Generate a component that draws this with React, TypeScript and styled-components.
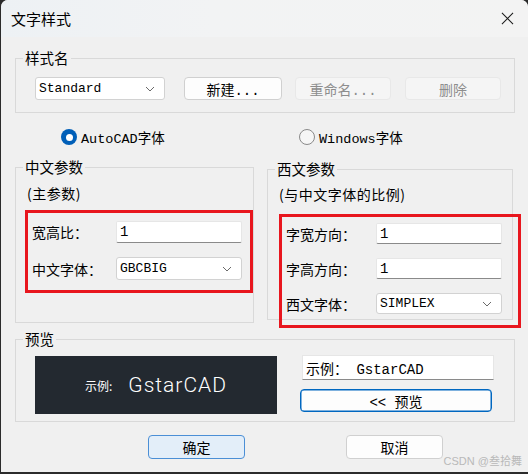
import React from "react";
import styled, {createGlobalStyle} from "styled-components";

const colors = {
    frame: "#2b2b2b",
    body: "#f0f0f0",
    line: "#d9d9d9",
    red: "#e8161e",
    blue: "#005fb8",
    text: "#000000",
    disabled: "#8d8d8d",
};

const cjk = `"Noto Sans CJK SC", "Noto Sans", sans-serif`;
const mono = `"Liberation Mono", "Noto Sans CJK SC", monospace`;

const GlobalStyle = createGlobalStyle`
  html, body {
    margin: 0;
    padding: 0;
    background: ${colors.frame};
  }
  body {
    width: 528px;
    height: 474px;
    overflow: hidden;
    font-family: ${cjk};
  }
`;

const App = () => {
    return (
        <>
            <GlobalStyle/>
            <Window>
                <TitleBar>
                    <Title>文字样式</Title>
                    <CloseIcon viewBox="0 0 14 14">
                        <path d="M1 1 L13 13 M13 1 L1 13" stroke="#1a1a1a" strokeWidth="1.1"/>
                    </CloseIcon>
                </TitleBar>

                <Content>
                    <Group $height={55} $top={21}>
                        <GroupLabel>样式名</GroupLabel>
                        <StyleRow>
                            <Combo $width={130}>
                                <ComboText>Standard</ComboText>
                                <Chevron/>
                            </Combo>
                            <Button $width={98}>新建...</Button>
                            <Button $width={96} $disabled>重命名...</Button>
                            <Button $width={96} $disabled>删除</Button>
                        </StyleRow>
                    </Group>

                    <RadioRow>
                        <RadioItem $width={238}>
                            <Radio $checked/>
                            <RadioText>AutoCAD字体</RadioText>
                        </RadioItem>
                        <RadioItem>
                            <Radio/>
                            <RadioText>Windows字体</RadioText>
                        </RadioItem>
                    </RadioRow>

                    <ParamsRow>
                        <Group $height={156} $width={239} $top={0}>
                            <GroupLabel>中文参数</GroupLabel>
                            <Hint $left={11} $top={16}>(主参数)</Hint>
                            <Highlight $left={9} $top={8} $width={228} $height={83} $pad="8px 0 0 4px">
                                <FieldRow>
                                    <FieldLabel $width={84}>宽高比：</FieldLabel>
                                    <TextBox>1</TextBox>
                                </FieldRow>
                                <FieldRow>
                                    <FieldLabel $width={84}>中文字体：</FieldLabel>
                                    <Combo $width={126}>
                                        <ComboText>GBCBIG</ComboText>
                                        <Chevron/>
                                    </Combo>
                                </FieldRow>
                            </Highlight>
                        </Group>

                        <Group $height={151} $width={246} $top={2}>
                            <GroupLabel>西文参数</GroupLabel>
                            <Hint $left={11} $top={15}>(与中文字体的比例)</Hint>
                            <Highlight $left={11} $top={11} $width={242} $height={114} $pad="6px 0 0 4px" $gap={14}>
                                <FieldRow>
                                    <FieldLabel $width={90}>字宽方向：</FieldLabel>
                                    <TextBox $height={21}>1</TextBox>
                                </FieldRow>
                                <FieldRow>
                                    <FieldLabel $width={90}>字高方向：</FieldLabel>
                                    <TextBox $height={21}>1</TextBox>
                                </FieldRow>
                                <FieldRow>
                                    <FieldLabel $width={90}>西文字体：</FieldLabel>
                                    <Combo $width={126} $height={21}>
                                        <ComboText>SIMPLEX</ComboText>
                                        <Chevron/>
                                    </Combo>
                                </FieldRow>
                            </Highlight>
                        </Group>
                    </ParamsRow>

                    <Group $height={83} $top={16}>
                        <GroupLabel>预览</GroupLabel>
                        <PreviewRow>
                            <PreviewCanvas>
                                <PreviewSmall>示例:</PreviewSmall>
                                <PreviewBig>GstarCAD</PreviewBig>
                            </PreviewCanvas>
                            <PreviewSide>
                                <SampleBox>示例： GstarCAD</SampleBox>
                                <Button $width={192} $focused>&lt;&lt; 预览</Button>
                            </PreviewSide>
                        </PreviewRow>
                    </Group>

                    <FooterRow>
                        <Button $width={97} $height={24} $primary>确定</Button>
                        <Button $width={97} $height={24}>取消</Button>
                    </FooterRow>
                </Content>
                <Watermark>CSDN @叁拾舞</Watermark>
            </Window>
        </>
    );
};

const Chevron = () => (
    <ChevronIcon viewBox="0 0 10 6">
        <path d="M1 1 L5 5 L9 1" fill="none" stroke="#6a6a6a" strokeWidth="1"/>
    </ChevronIcon>
);

const Window = styled.div`
  position: relative;
  box-sizing: border-box;
  width: 527px;
  height: 472px;
  margin-left: 1px;
  background: ${colors.body};
  border-radius: 7px 7px 0 0;
  overflow: hidden;
  display: flex;
  flex-direction: column;
`;

const TitleBar = styled.div`
  height: 37px;
  flex-shrink: 0;
  display: flex;
  align-items: center;
  justify-content: space-between;
  padding: 0 14px 0 10px;
  background: linear-gradient(90deg, #edf1f4 0%, #f2f3f4 40%, #f3f3f3 100%);
`;

const Title = styled.span`
  font-family: ${cjk};
  font-size: 15px;
  color: ${colors.text};
  line-height: 18px;
`;

const CloseIcon = styled.svg`
  width: 13px;
  height: 13px;
`;

const Content = styled.div`
  display: flex;
  flex-direction: column;
  padding: 0 13px 0 14px;
`;

const Group = styled.div<{ $height: number; $width?: number; $top: number }>`
  position: relative;
  box-sizing: border-box;
  height: ${p => p.$height}px;
  width: ${p => (p.$width ? `${p.$width}px` : "auto")};
  margin-top: ${p => p.$top}px;
  border: 1px solid ${colors.line};
  flex-shrink: 0;
`;

const GroupLabel = styled.span`
  position: absolute;
  top: -10px;
  left: 7px;
  padding: 0 2px;
  background: ${colors.body};
  font-family: ${cjk};
  font-size: 14.5px;
  line-height: 18px;
  color: ${colors.text};
`;

const StyleRow = styled.div`
  display: flex;
  align-items: center;
  padding: 18px 0 0 19px;

  & > *:nth-child(2) { margin-left: 19px; }
  & > *:nth-child(3) { margin-left: 13px; }
  & > *:nth-child(4) { margin-left: 14px; }
`;

const Combo = styled.div<{ $width: number; $height?: number }>`
  box-sizing: border-box;
  width: ${p => p.$width}px;
  height: ${p => p.$height ?? 23}px;
  display: flex;
  align-items: center;
  justify-content: space-between;
  padding: 0 9px 0 3px;
  background: #ffffff;
  border: 1px solid #d2d2d2;
  border-radius: 3px;
`;

const ComboText = styled.span`
  font-family: ${mono};
  font-size: 13px;
  color: ${colors.text};
`;

const ChevronIcon = styled.svg`
  width: 10px;
  height: 6px;
`;

const Button = styled.div<{ $width: number; $height?: number; $disabled?: boolean; $primary?: boolean; $focused?: boolean }>`
  box-sizing: border-box;
  width: ${p => p.$width}px;
  height: ${p => p.$height ?? 23}px;
  display: flex;
  align-items: center;
  justify-content: center;
  border-radius: 4px;
  font-family: ${mono};
  font-size: 14px;
  color: ${p => (p.$disabled ? colors.disabled : colors.text)};
  background: ${p => (p.$primary ? "#e3eef9" : p.$disabled ? "#f5f5f5" : "#fdfdfd")};
  border: 1px solid ${p => (p.$primary ? "#4b8fd6" : p.$focused ? "#0067c0" : p.$disabled ? "#e8e8e8" : "#d0d0d0")};
  ${p => p.$focused && "box-shadow: inset 0 0 0 0.5px #0067c0;"}
`;

const RadioRow = styled.div`
  display: flex;
  align-items: center;
  height: 18px;
  margin-top: 15px;
  padding-left: 46px;
`;

const RadioItem = styled.div<{ $width?: number }>`
  display: flex;
  align-items: center;
  gap: 4px;
  width: ${p => (p.$width ? `${p.$width}px` : "auto")};
`;

const Radio = styled.span<{ $checked?: boolean }>`
  box-sizing: border-box;
  width: 16px;
  height: 16px;
  border-radius: 50%;
  background: ${p => (p.$checked ? colors.blue : "#f6f6f6")};
  border: ${p => (p.$checked ? "none" : "1px solid #8a8a8a")};
  display: flex;
  align-items: center;
  justify-content: center;

  &::after {
    content: "";
    display: ${p => (p.$checked ? "block" : "none")};
    width: 7px;
    height: 7px;
    border-radius: 50%;
    background: #ffffff;
  }
`;

const RadioText = styled.span`
  font-family: ${mono};
  font-size: 13.5px;
  color: ${colors.text};
`;

const ParamsRow = styled.div`
  display: flex;
  align-items: flex-start;
  gap: 13px;
  margin-top: 21px;
`;

const Hint = styled.div<{ $left: number; $top: number }>`
  margin: ${p => p.$top}px 0 0 ${p => p.$left}px;
  font-family: ${cjk};
  font-size: 14px;
  line-height: 18px;
  letter-spacing: 0.5px;
  color: ${colors.text};
`;

const Highlight = styled.div<{ $left: number; $top: number; $width: number; $height: number; $pad: string; $gap?: number }>`
  box-sizing: border-box;
  width: ${p => p.$width}px;
  height: ${p => p.$height}px;
  margin: ${p => p.$top}px 0 0 ${p => p.$left}px;
  border: 3px solid ${colors.red};
  padding: ${p => p.$pad};
  display: flex;
  flex-direction: column;
  gap: ${p => p.$gap ?? 14}px;
`;

const FieldRow = styled.div`
  display: flex;
  align-items: center;
`;

const FieldLabel = styled.span<{ $width: number }>`
  width: ${p => p.$width}px;
  font-family: ${cjk};
  font-size: 14px;
  color: ${colors.text};
`;

const TextBox = styled.div<{ $height?: number }>`
  box-sizing: border-box;
  width: 126px;
  height: ${p => p.$height ?? 22}px;
  display: flex;
  align-items: center;
  padding-left: 3px;
  background: #ffffff;
  border: 1px solid #e6e6e6;
  border-bottom-color: #8a8a8a;
  border-radius: 2px;
  font-family: ${mono};
  font-size: 14px;
  color: ${colors.text};
`;

const PreviewRow = styled.div`
  display: flex;
  align-items: flex-start;
  padding: 16px 0 0 19px;
  gap: 25px;
`;

const PreviewCanvas = styled.div`
  width: 242px;
  height: 58px;
  background: #232930;
  display: flex;
  align-items: center;
  padding-left: 50px;
  box-sizing: border-box;
  gap: 16px;
`;

const PreviewSmall = styled.span`
  font-family: ${cjk};
  font-size: 12px;
  font-weight: 400;
  color: #ffffff;
`;

const PreviewBig = styled.span`
  font-family: Roboto, "Liberation Sans", sans-serif;
  font-size: 21px;
  font-weight: 300;
  letter-spacing: 1px;
  color: #ffffff;
`;

const PreviewSide = styled.div`
  display: flex;
  flex-direction: column;
  align-items: flex-start;
  gap: 9px;
  margin-top: -1px;
  margin-left: -2px;
`;

const SampleBox = styled.div`
  box-sizing: border-box;
  width: 192px;
  height: 25px;
  margin-left: 2px;
  display: flex;
  align-items: center;
  padding-left: 3px;
  background: #ffffff;
  border: 1px solid #e6e6e6;
  border-bottom-color: #8a8a8a;
  font-family: ${mono};
  font-size: 14px;
  color: ${colors.text};
  white-space: pre;
`;

const FooterRow = styled.div`
  display: flex;
  gap: 101px;
  margin-top: 13px;
  padding-left: 133px;
`;

const Watermark = styled.div`
  position: absolute;
  right: 6px;
  bottom: 4px;
  font-family: "Liberation Sans", ${cjk};
  font-size: 11px;
  color: #b9b9b9;
`;

export default App;
